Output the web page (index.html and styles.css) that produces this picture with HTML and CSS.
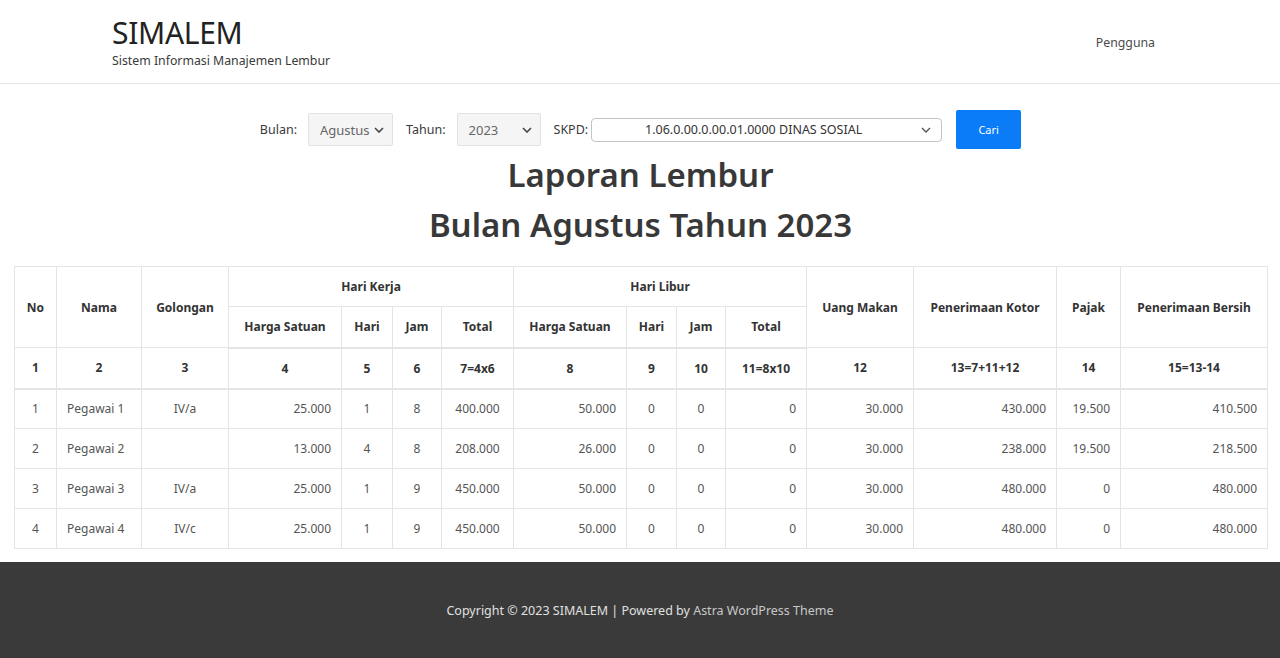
FILE: index.html
```html
<!DOCTYPE html>
<html lang="id">
<head>
<meta charset="utf-8">
<title>SIMALEM - Laporan Lembur</title>
<link rel="stylesheet" href="styles.css">
</head>
<body>
<header class="site-header">
  <div class="brand">
    <div class="brand-title">SIMALEM</div>
    <div class="brand-sub">Sistem Informasi Manajemen Lembur</div>
  </div>
  <nav class="nav"><a class="nav-link">Pengguna</a></nav>
</header>

<main class="content">
  <form class="filter">
    <label class="flabel">Bulan:</label>
    <div class="sel sel-gray sel-bulan"><span>Agustus</span><svg class="chev" viewBox="0 0 10 6" width="10" height="6"><path d="M1 1l4 4 4-4" fill="none" stroke="#444" stroke-width="1.6"/></svg></div>
    <label class="flabel">Tahun:</label>
    <div class="sel sel-gray sel-tahun"><span>2023</span><svg class="chev" viewBox="0 0 10 6" width="10" height="6"><path d="M1 1l4 4 4-4" fill="none" stroke="#444" stroke-width="1.6"/></svg></div>
    <label class="flabel flabel-tight">SKPD:</label>
    <div class="sel sel-white sel-skpd"><span class="sel-text">1.06.0.00.0.00.01.0000 DINAS SOSIAL</span><svg class="chev" viewBox="0 0 10 6" width="10" height="6"><path d="M1 1l4 4 4-4" fill="none" stroke="#555" stroke-width="1.4"/></svg></div>
    <button type="button" class="btn">Cari</button>
  </form>

  <h1 class="title">Laporan Lembur</h1>
  <h1 class="title title2">Bulan Agustus Tahun 2023</h1>

  <table class="report">
    <colgroup>
      <col style="width:42px"><col style="width:85px"><col style="width:87px">
      <col style="width:113px"><col style="width:51px"><col style="width:49px"><col style="width:72px">
      <col style="width:113px"><col style="width:50px"><col style="width:49px"><col style="width:81px">
      <col style="width:107px"><col style="width:143px"><col style="width:64px"><col style="width:147px">
    </colgroup>
    <thead>
      <tr>
        <th rowspan="2">No</th>
        <th rowspan="2">Nama</th>
        <th rowspan="2">Golongan</th>
        <th colspan="4">Hari Kerja</th>
        <th colspan="4">Hari Libur</th>
        <th rowspan="2">Uang Makan</th>
        <th rowspan="2">Penerimaan Kotor</th>
        <th rowspan="2">Pajak</th>
        <th rowspan="2">Penerimaan Bersih</th>
      </tr>
      <tr class="subrow">
        <th>Harga Satuan</th><th>Hari</th><th>Jam</th><th>Total</th>
        <th>Harga Satuan</th><th>Hari</th><th>Jam</th><th>Total</th>
      </tr>
      <tr class="numrow">
        <th>1</th><th>2</th><th>3</th><th>4</th><th>5</th><th>6</th><th>7=4x6</th>
        <th>8</th><th>9</th><th>10</th><th>11=8x10</th><th>12</th><th>13=7+11+12</th><th>14</th><th>15=13-14</th>
      </tr>
    </thead>
    <tbody>
      <tr>
        <td class="c">1</td><td>Pegawai 1</td><td class="c">IV/a</td>
        <td class="r">25.000</td><td class="c">1</td><td class="c">8</td><td class="c">400.000</td>
        <td class="r">50.000</td><td class="c">0</td><td class="c">0</td><td class="r">0</td>
        <td class="r">30.000</td><td class="r">430.000</td><td class="r">19.500</td><td class="r">410.500</td>
      </tr>
      <tr>
        <td class="c">2</td><td>Pegawai 2</td><td class="c"></td>
        <td class="r">13.000</td><td class="c">4</td><td class="c">8</td><td class="c">208.000</td>
        <td class="r">26.000</td><td class="c">0</td><td class="c">0</td><td class="r">0</td>
        <td class="r">30.000</td><td class="r">238.000</td><td class="r">19.500</td><td class="r">218.500</td>
      </tr>
      <tr>
        <td class="c">3</td><td>Pegawai 3</td><td class="c">IV/a</td>
        <td class="r">25.000</td><td class="c">1</td><td class="c">9</td><td class="c">450.000</td>
        <td class="r">50.000</td><td class="c">0</td><td class="c">0</td><td class="r">0</td>
        <td class="r">30.000</td><td class="r">480.000</td><td class="r">0</td><td class="r">480.000</td>
      </tr>
      <tr>
        <td class="c">4</td><td>Pegawai 4</td><td class="c">IV/c</td>
        <td class="r">25.000</td><td class="c">1</td><td class="c">9</td><td class="c">450.000</td>
        <td class="r">50.000</td><td class="c">0</td><td class="c">0</td><td class="r">0</td>
        <td class="r">30.000</td><td class="r">480.000</td><td class="r">0</td><td class="r">480.000</td>
      </tr>
    </tbody>
  </table>
</main>

<footer class="site-footer">
  <p>Copyright © 2023 SIMALEM | Powered by <a class="flink">Astra WordPress Theme</a></p>
</footer>
</body>
</html>
```

FILE: styles.css
```css
* { box-sizing: border-box; }
html, body { margin: 0; padding: 0; }
body {
  font-family: "Noto Sans", "Open Sans", sans-serif;
  color: #3a3a3a;
  background: #fff;
}
.site-header {
  height: 84px;
  border-bottom: 1px solid #e6e6e6;
  display: flex;
  justify-content: space-between;
  align-items: flex-start;
  padding: 0 125px 0 112px;
}
.brand { padding-top: 14px; }
.brand-title {
  font-size: 30px;
  line-height: 38px;
  color: #222;
  letter-spacing: -0.3px;
}
.brand-sub {
  font-size: 12.3px;
  line-height: 18px;
  color: #3a3a3a;
}
.nav { padding-top: 30px; }
.nav-link { font-size: 12.3px; color: #4b4b4b; }

.content { padding: 26px 13px 13px 14px; }

.filter {
  display: flex;
  align-items: center;
  justify-content: center;
  margin: 0;
  padding-left: 0;
}
.flabel { font-size: 12.5px; color: #3a3a3a; margin-right: 11px; }
.flabel-tight { margin-right: 3px; }
.sel {
  display: flex;
  align-items: center;
  font-size: 13px;
  color: #666;
}
.sel-gray {
  height: 33px;
  background: #f5f5f5;
  border: 1px solid #e2e2e2;
  border-radius: 2px;
  padding: 0 8px 0 11px;
  justify-content: space-between;
  margin-right: 13px;
}
.sel-bulan { width: 85px; }
.sel-tahun { width: 84px; }
.sel-white {
  height: 24px;
  width: 351px;
  background: #fff;
  border: 1px solid #c4c4c4;
  border-radius: 4px;
  padding: 0 10px 0 12px;
  color: #333;
  font-size: 12.5px;
}
.sel-text { flex: 1; text-align: center; padding-right: 18px; }
.chev { flex: none; }
.btn {
  margin-left: 14px;
  width: 65px;
  height: 39px;
  background: #0a7cf7;
  border: none;
  border-radius: 2px;
  color: #fff;
  font-family: inherit;
  font-size: 11px;
}

.title {
  margin: 3px 0 0 0;
  text-align: center;
  font-size: 33px;
  line-height: 46px;
  font-weight: 600;
  color: #383838;
}
.title2 { margin-top: 4px; margin-bottom: 18px; }

.report {
  width: 1253px;
  table-layout: fixed;
  border-collapse: collapse;
  font-size: 12px;
}
.report th, .report td {
  border: 1px solid #e3e4e6;
  height: 40px;
  padding: 0 10px;
}
.report th {
  font-weight: 700;
  color: #333;
  text-align: center;
  font-size: 12px;
}
.report thead .subrow th,
.report thead .numrow th { border-bottom-width: 2px; height: 41px; }
.report td { color: #555; }
.report td.c { text-align: center; }
.report td.r { text-align: right; }

.site-footer {
  background: #3a3a3a;
  height: 97px;
  display: flex;
  align-items: center;
  justify-content: center;
}
.site-footer p {
  margin: 0 0 0 0;
  color: #e0e0e0;
  font-size: 12.5px;
}
.flink { color: #c8c8c8; }
```
